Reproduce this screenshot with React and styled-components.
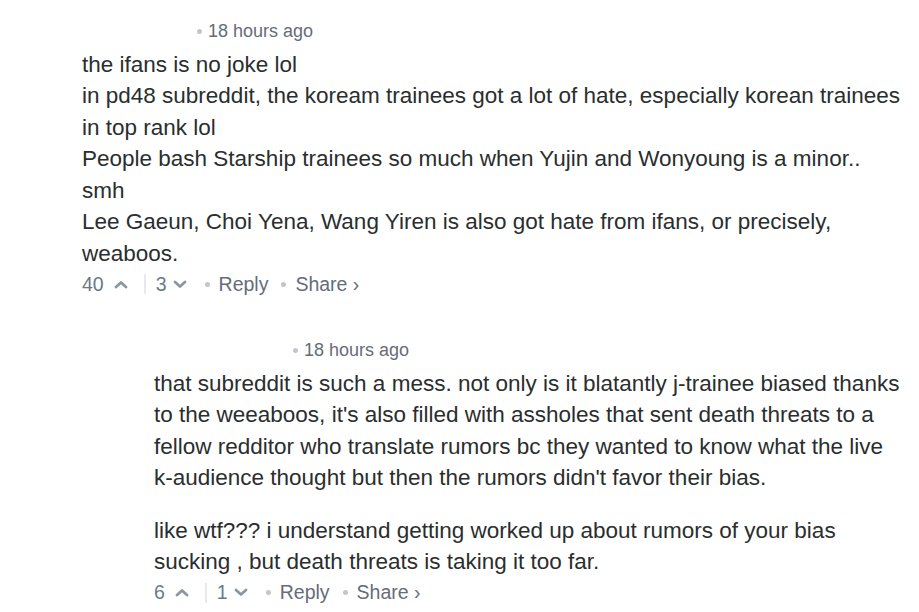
import React from "react";
import styled, { createGlobalStyle } from "styled-components";

const Global = createGlobalStyle`
  html, body { margin: 0; padding: 0; background: #fff; }
  body { font-family: "Liberation Sans", Arial, sans-serif; }
`;

const Thread = styled.div`
  padding: 20px 17px 0 82px;
`;

const Comment = styled.div`
  margin-left: ${(p) => (p.$depth ? p.$depth * 72 : 0)}px;
  margin-top: ${(p) => (p.$depth ? 41 : 0)}px;
`;

const Header = styled.div`
  display: flex;
  align-items: center;
  height: 22px;
  font-size: 18px;
  line-height: 22px;
  color: #656c7a;
  padding-left: ${(p) => p.$nameWidth}px;
  margin-bottom: 6.5px;
`;

const Dot = styled.span`
  display: inline-block;
  width: 5px;
  height: 5px;
  border-radius: 50%;
  background: #c2c6cc;
  margin: 0 ${(p) => p.$right || 6}px 0 ${(p) => p.$left || 0}px;
`;

const Body = styled.div`
  font-size: 22.5px;
  line-height: 31.5px;
  color: #2a2e2e;
`;

const Para = styled.p`
  margin: 0;
  & + & { margin-top: 21px; }
`;

const Footer = styled.div`
  display: flex;
  align-items: center;
  height: 28px;
  font-size: 19.5px;
  color: #656c7a;
  margin-top: 1px;
`;

const Count = styled.span`
  color: #687a86;
`;

const Vote = styled.span`
  display: inline-flex;
  align-items: center;
  gap: ${(p) => p.$gap}px;
`;

const Sep = styled.span`
  display: inline-block;
  width: 2px;
  height: 20px;
  background: #e7e9ee;
  margin: 0 10px 0 ${(p) => p.$left}px;
`;

const Action = styled.span`
  color: #656c7a;
`;

const Chevron = ({ up }) => (
  <svg width="14" height="9" viewBox="0 0 14 9" style={{ display: "block" }}>
    <path
      d={up ? "M2 7 L7 2.5 L12 7" : "M2 2 L7 6.5 L12 2"}
      fill="none"
      stroke="#8a97a3"
      strokeWidth="2.8"
      strokeLinecap="round"
      strokeLinejoin="round"
    />
  </svg>
);

const CommentFooter = ({ up, down }) => (
  <Footer>
    <Vote $gap={10}>
      <Count>{up}</Count>
      <Chevron up />
    </Vote>
    <Sep $left={up > 9 ? 16 : 16} />
    <Vote $gap={6}>
      <Count>{down}</Count>
      <Chevron />
    </Vote>
    <Dot $left={18} $right={9} />
    <Action>Reply</Action>
    <Dot $left={13} $right={9} />
    <Action>Share ›</Action>
  </Footer>
);

export default function App() {
  return (
    <>
      <Global />
      <Thread>
        <Comment>
          <Header $nameWidth={115}>
            <Dot />
            18 hours ago
          </Header>
          <Body>
            <Para>
              the ifans is no joke lol
              <br />
              in pd48 subreddit, the koream trainees got a lot of hate, especially korean trainees in top rank lol
              <br />
              People bash Starship trainees so much when Yujin and Wonyoung is a minor.. smh
              <br />
              Lee Gaeun, Choi Yena, Wang Yiren is also got hate from ifans, or precisely, weaboos.
            </Para>
          </Body>
          <CommentFooter up={40} down={3} />
        </Comment>
        <Comment $depth={1}>
          <Header $nameWidth={139}>
            <Dot />
            18 hours ago
          </Header>
          <Body>
            <Para>
              that subreddit is such a mess. not only is it blatantly j-trainee biased thanks to the weeaboos, it's also filled with assholes that sent death threats to a fellow redditor who translate rumors bc they wanted to know what the live k-audience thought but then the rumors didn't favor their bias.
            </Para>
            <Para>
              like wtf??? i understand getting worked up about rumors of your bias sucking , but death threats is taking it too far.
            </Para>
          </Body>
          <CommentFooter up={6} down={1} />
        </Comment>
      </Thread>
    </>
  );
}
